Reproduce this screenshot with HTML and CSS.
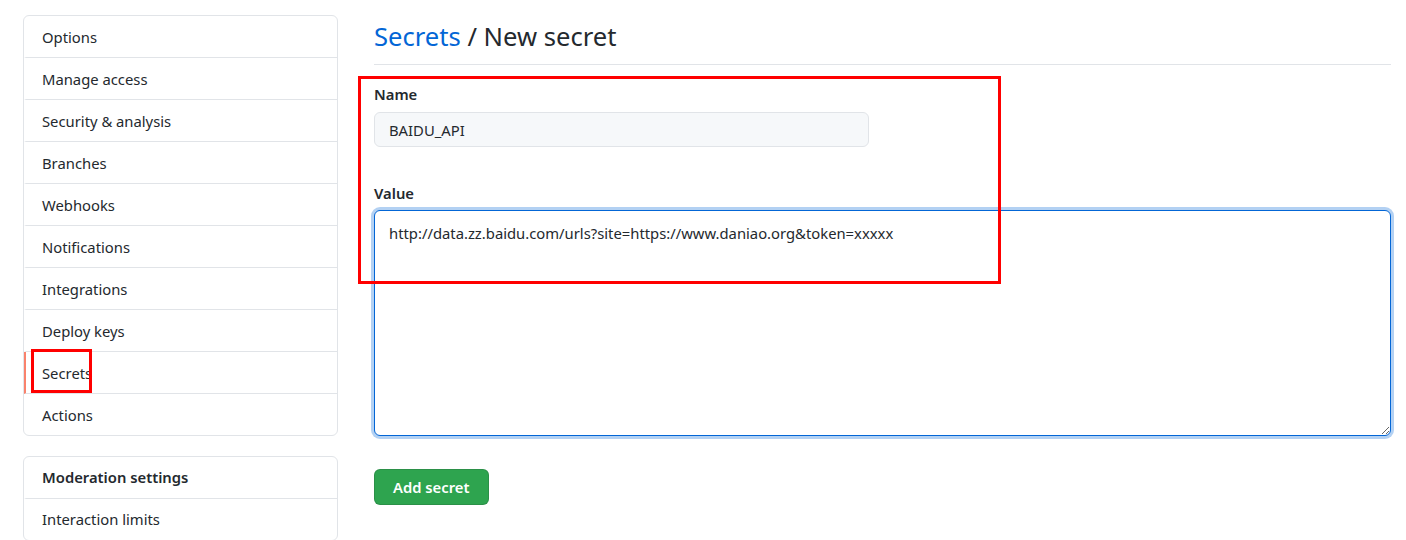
FILE: index.html
```html
<!DOCTYPE html>
<html>
<head>
    <title>New secret</title>
    <meta name="viewport" content="width=device-width, initial-scale=1.0">
    <link rel="stylesheet" href="styles.css">
</head>
<body>
    <div class="page">
        <nav class="sidebar">
            <div class="menu">
                <a class="menu-item">Options</a>
                <a class="menu-item">Manage access</a>
                <a class="menu-item">Security &amp; analysis</a>
                <a class="menu-item">Branches</a>
                <a class="menu-item">Webhooks</a>
                <a class="menu-item">Notifications</a>
                <a class="menu-item">Integrations</a>
                <a class="menu-item">Deploy keys</a>
                <a class="menu-item selected">Secrets</a>
                <a class="menu-item">Actions</a>
            </div>
            <div class="menu second">
                <div class="menu-heading">Moderation settings</div>
                <a class="menu-item">Interaction limits</a>
            </div>
        </nav>

        <main class="content">
            <h2 class="subhead"><a class="crumb">Secrets</a> / New secret</h2>

            <label class="field-label">Name</label>
            <input class="name-input" type="text" value="BAIDU_API">

            <label class="field-label value-label">Value</label>
            <textarea class="value-input">http://data.zz.baidu.com/urls?site=https://www.daniao.org&amp;token=xxxxx</textarea>

            <button class="btn-primary">Add secret</button>
        </main>

        <!-- annotation boxes from the screenshot -->
        <div class="mark mark-form"></div>
        <div class="mark mark-menu"></div>
    </div>
</body>
</html>
```

FILE: styles.css
```css
body {
    margin: 0;
    font-family: "Segoe UI", "Noto Sans", sans-serif;
    font-size: 14.8px;
    color: #24292e;
    background-color: #fff;
}

.page {
    position: relative;
    display: flex;
    gap: 36px;
    padding: 15px 15px 0 23px;
}

.sidebar {
    width: 315px;
    flex-shrink: 0;
}

.menu {
    border: 1px solid #e1e4e8;
    border-radius: 6px;
    overflow: hidden;
}

.menu-item,
.menu-heading {
    display: block;
    padding: 11px 16px 9px;
    line-height: 21px;
    border-bottom: 1px solid #e1e4e8;
    border-left: 2px solid transparent;
    color: #24292e;
}

.menu-item:last-child {
    border-bottom: none;
}

.menu-item.selected {
    border-left-color: #f9826c; /* orange marker */
}

.menu-heading {
    font-weight: 600;
}

.menu.second {
    margin-top: 20px;
}

.menu.second .menu-item,
.menu.second .menu-heading {
    padding: 10px 16px;
}

.content {
    flex: 1;
    margin-top: 4px;
}

.subhead {
    margin: 0;
    padding-bottom: 9px;
    border-bottom: 1px solid #e1e4e8;
    font-size: 25.6px;
    font-weight: 400;
    line-height: 36px;
}

.crumb {
    color: #0366d6;
}

.field-label {
    display: block;
    margin-top: 19px;
    font-weight: 600;
    line-height: 21px;
}

.value-label {
    margin-top: 36px;
}

.name-input,
.value-input {
    display: block;
    box-sizing: border-box;
    margin-top: 7px;
    font-family: inherit;
    font-size: 14.8px;
    color: #24292e;
    border: 1px solid #e1e4e8;
    border-radius: 6px;
}

.name-input {
    width: 495px;
    height: 35px;
    padding: 0 14px;
    background-color: #f6f8fa;
}

.value-input {
    margin-top: 6px;
    width: 100%;
    height: 226px;
    padding: 12px 14px;
    line-height: 21px;
    resize: vertical;
    border-color: #0366d6;
    box-shadow: 0 0 0 3px rgba(3, 102, 214, 0.3); /* focus ring */
    outline: none;
}

.btn-primary {
    display: block;
    margin-top: 33px;
    height: 36px;
    padding: 0 18px;
    background-color: #2ea44f;
    color: #fff;
    font-family: inherit;
    font-size: 14.8px;
    font-weight: 600;
    border: 1px solid rgba(27, 31, 35, 0.15);
    border-radius: 6px;
}

.mark {
    position: absolute;
    border: 3px solid #ff0000;
    box-sizing: border-box;
}

.mark-form {
    left: 358px;
    top: 76px;
    width: 643px;
    height: 208px;
}

.mark-menu {
    left: 31px;
    top: 349px;
    width: 61px;
    height: 44px;
}
```
